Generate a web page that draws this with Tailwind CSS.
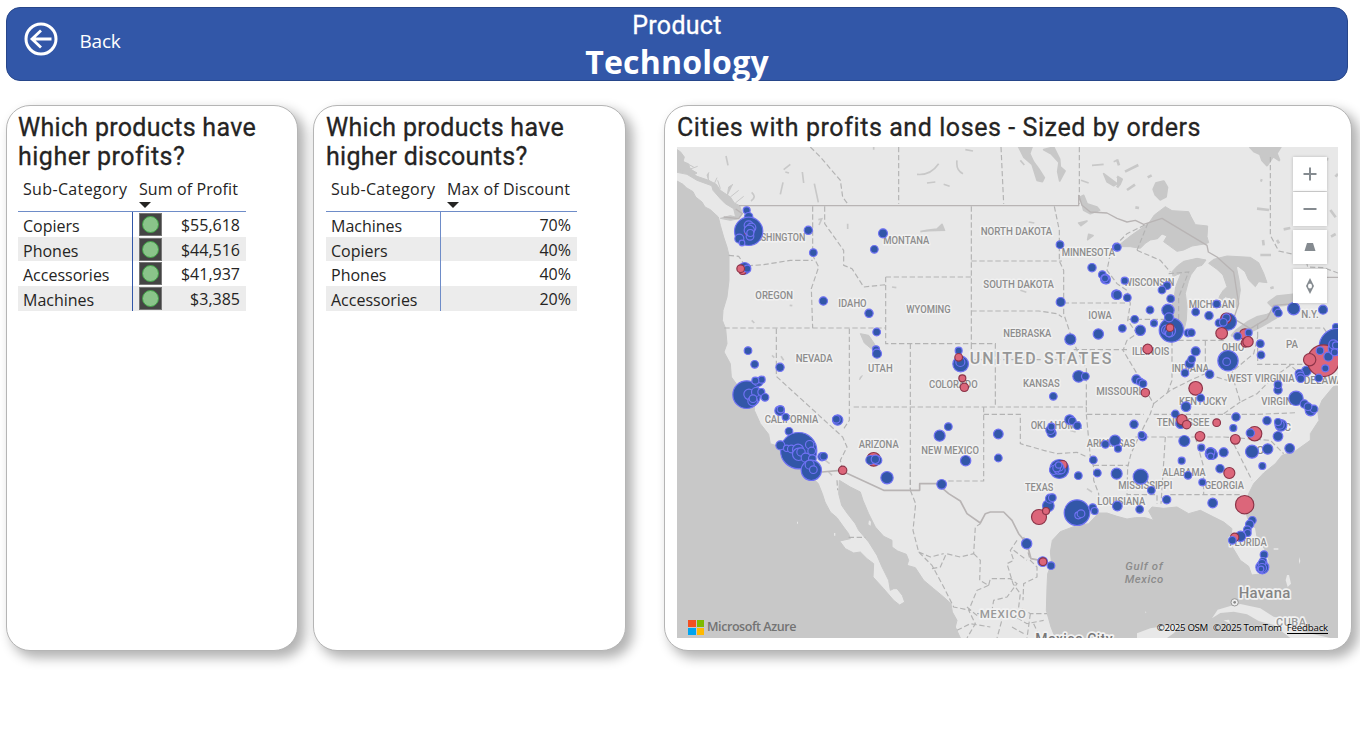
<!DOCTYPE html>
<html lang="en">
<head>
<meta charset="utf-8">
<title>Product Technology</title>
<script src="https://cdn.jsdelivr.net/npm/@tailwindcss/browser@4"></script>
</head>
<body class="bg-white w-[1360px] h-[729px] overflow-hidden font-['Open_Sans',sans-serif] text-[#252423]">
<header class="relative ml-[6px] mt-[7px] w-[1342px] h-[74px] rounded-[14px] bg-[#3257a8] border border-[#27468a] flex justify-center text-white">
  <div class="absolute left-[16.500px] top-[14px] flex items-center">
    <svg class="size-[34px]" viewBox="0 0 34 34" fill="none" stroke="#fff"><circle cx="17" cy="17" r="15" stroke-width="3"/><path d="M27.500 17H8M17 8.500L8 17L17 25.500" stroke-width="2.800"/></svg>
    <span class="ml-[22px] mt-[3px] text-[19px] leading-6 tracking-[-0.2px]">Back</span>
  </div>
  <div class="flex flex-col items-center">
    <span class="mt-[3px] h-[29px] leading-[30px] text-[25px] tracking-[0.3px] font-['Roboto',sans-serif] [-webkit-text-stroke:0.3px_white]">Product</span>
    <span class="h-[44px] leading-[43px] text-[32px] font-bold tracking-[0.2px]">Technology</span>
  </div>
</header>
<main class="mt-[24px] ml-[6px] flex items-start">
  <section class="w-[292px] h-[546px] bg-white rounded-[24px] border border-[#b5b5b5] shadow-[6px_6px_12px_1px_rgba(0,0,0,0.3)] pl-[11px] pt-[7px]">
    <h2 class="font-['Roboto',sans-serif] text-[25px] leading-[29px] tracking-[0.3px] [-webkit-text-stroke:0.3px_#252423]"><span>Which products have</span><br><span class="tracking-[0.5px]">higher profits?</span></h2>
    <div class="mt-[7px] w-[228px] text-[16px]">
      <div class="flex h-[34px] border-b border-[#6e8cc8] mt-[6px]">
        <div class="w-[115px] pl-[5px] leading-[22px] tracking-[0.35px]">Sub-Category</div>
        <div class="pl-[6px] leading-[22px] tracking-[0.1px]">Sum of Profit<div class="mt-[2px] border-x-[6px] border-x-transparent border-t-[6px] border-t-[#252423] w-0"></div></div>
      </div>
      <div id="profit" class="leading-[25px]"></div>
    </div>
  </section>
  <section class="ml-[15px] w-[313px] h-[546px] bg-white rounded-[24px] border border-[#b5b5b5] shadow-[6px_6px_12px_1px_rgba(0,0,0,0.3)] pl-[12px] pt-[7px]">
    <h2 class="font-['Roboto',sans-serif] text-[25px] leading-[29px] tracking-[0.3px] [-webkit-text-stroke:0.3px_#252423]"><span>Which products have</span><br><span>higher discounts?</span></h2>
    <div class="mt-[7px] w-[251px] text-[16px]">
      <div class="flex h-[34px] border-b border-[#6e8cc8] mt-[6px]">
        <div class="w-[115px] pl-[5px] leading-[22px] tracking-[0.35px]">Sub-Category</div>
        <div class="pl-[6px] leading-[22px] tracking-[0.15px]">Max of Discount<div class="mt-[2px] border-x-[6px] border-x-transparent border-t-[6px] border-t-[#252423] w-0"></div></div>
      </div>
      <div id="discount" class="leading-[25px]"></div>
    </div>
  </section>
  <section class="ml-[38px] w-[688px] h-[546px] bg-white rounded-[24px] border border-[#b5b5b5] shadow-[6px_6px_12px_1px_rgba(0,0,0,0.3)] pl-[12px] pt-[7px]">
    <h2 class="font-['Roboto',sans-serif] text-[25px] leading-[29px] tracking-[0.58px] [-webkit-text-stroke:0.3px_#252423]"><span>Cities with profits and loses - Sized by orders</span></h2>
    <div class="relative mt-[5px] w-[661px] h-[491px] overflow-hidden bg-[#e8e8e8]">
      <svg class="block w-[661px] h-[491px]" viewBox="0 0 1983 1473" font-family="Roboto, sans-serif">
        <!-- water -->
        <g fill="#c8c8c8" stroke="#c8c8c8" stroke-width="3" stroke-linejoin="round">
          <path d="M0 102L18 112 28 122 48 134 56 150 75 165 84 180 100 188 124 210 130 235 140 270 150 300 156 325 156 400 150 450 138 490 136 520 146 545 150 590 141 615 160 650 163 690 185 720 232 770 232 790 250 830 275 862 280 890 310 900 340 930 375 960 400 985 424 1010 436 1040 444 1065 460 1095 480 1112 500 1140 515 1160 520 1175 488 1182 505 1205 530 1218 550 1215 570 1235 590 1250 588 1290 620 1325 650 1360 668 1374 683 1365 676 1345 660 1325 650 1325 640 1330 635 1300 615 1260 600 1225 575 1185 545 1150 535 1130 510 1098 494 1075 485 1040 487 1000 520 1020 550 1035 558 1060 575 1100 595 1140 620 1168 645 1180 645 1200 662 1212 688 1222 695 1240 690 1255 715 1262 740 1300 770 1325 800 1350 822 1370 826 1395 840 1420 835 1440 850 1473 0 1473Z"/>
          <path d="M0 62L30 68 60 88 95 100 118 112 130 130 160 150 172 168 188 176 196 200 182 216 160 220 130 214 160 206 176 210 170 185 145 170 130 155 108 130 104 116 60 100 30 82 0 76Z"/>
          <path d="M0 8L10 14 22 30 18 44 34 50 40 66 60 78 50 84 20 72 0 64ZM5 36L30 50 50 60M40 66L62 58M95 100L90 84 96 76M112 110L120 92M130 125L122 100M150 150L155 120 168 112M160 150L185 130M175 168L200 148" />
          <g transform="translate(1320 -141)">
            <path d="M0 440L40 408 95 370 112 345 145 320 165 332 215 335 222 350 235 374 272 378 270 410 275 428 262 432 225 438 200 450 180 454 155 436 140 425 150 408 135 402 122 416 100 420 85 430 70 445 40 440Z"/>
            <path d="M165 515L182 497 200 484 240 475 267 480 255 496 240 500 222 524 214 545 205 580 210 620 208 660 200 695 180 708 165 680 160 630 172 590 176 560 192 520 180 524 168 530Z"/>
            <path d="M275 490L290 478 330 468 400 472 425 488 440 520 450 548 425 545 415 560 395 540 384 515 365 500 358 500 366 540 370 570 362 625 345 612 340 594 324 590 312 610 300 612 308 588 318 572 330 560 318 525 300 508Z"/>
            <path d="M345 706L360 690 395 665 420 652 450 645 480 632 478 652 430 680 400 695 375 711ZM455 608L480 590 535 584 535 608 500 615 465 618ZM400 141L412 154 430 162 436 180 450 195 468 168 486 180 478 160 490 141ZM118 250L140 245 150 262 146 290 130 298 116 284 110 268ZM24 215L64 195M30 270L54 254M0 230L14 238 8 252 0 262M92 232L104 226M55 322L66 324M0 178L6 196M430 240L436 242M420 326L456 330M640 330L656 352M642 410L656 402M500 388L520 384M620 175L634 178M655 230L663 222M430 465L462 465M460 565L470 562M480 420L486 430M438 420L440 436" stroke-width="8"/>
          </g>
          <path d="M1983 712L1968 720 1935 760 1922 792 1926 820 1900 860 1900 880 1855 912 1815 925 1795 950 1760 978 1730 1010 1715 1040 1704 1085 1712 1115 1736 1145 1740 1170 1765 1210 1776 1240 1775 1262 1750 1281 1724 1284 1715 1258 1690 1240 1666 1200 1660 1178 1665 1145 1640 1125 1610 1110 1570 1090 1535 1100 1500 1080 1460 1084 1425 1080 1415 1092 1425 1110 1430 1120 1405 1112 1375 1112 1350 1116 1320 1108 1290 1098 1265 1098 1235 1130 1190 1139 1150 1154 1126 1180 1120 1215 1124 1250 1112 1280 1110 1320 1108 1390 1122 1440 1135 1473 1983 1473Z"/>
          <path d="M365 0L380 30 405 52 420 100 436 104 442 92 425 65 410 45 398 20 405 0ZM440 8L470 0 488 36 490 60 504 72 488 102 482 74 486 46 462 20ZM550 150L560 145 570 170 600 180 608 190 580 200 560 190ZM620 80L660 110 650 116 630 104ZM545 228L570 222 552 236ZM575 262L588 266 572 278ZM370 40L382 54M205 8L228 12M115 105L90 108M552 100L575 108M585 55L620 52M650 44L660 40M140 112L158 118M70 254L90 250 120 246 135 232 143 252M395 225L412 228M370 430L388 436" transform="translate(660 0)" stroke-width="5"/>
          <path d="M550 560L575 565 592 590 598 605 584 606 562 588ZM550 690L556 686 548 698Z"/>
        </g>
        <g fill="none" stroke="#c8c8c8" stroke-width="5"><path d="M147 27L153 55M320 68L340 52M325 75L336 78M318 106L310 142M376 75L380 108M412 110L424 166M224 136Q240 150 222 162M512 230V246M424 218L434 216 426 234M224 520L232 528M338 475L346 476M720 82Q760 86 785 50M840 40Q836 70 858 80M645 420L658 422M556 565H566M285 625L292 632M312 628L320 640M445 940L458 950M455 975L465 985M1180 850L1196 855M1230 1025L1245 1035M590 0V8"/></g>
        <!-- islands -->
        <g fill="#e8e8e8">
          <path d="M1605 1414L1622 1388 1660 1377 1690 1371 1750 1384 1790 1409 1840 1420 1880 1455 1960 1473 1840 1473 1790 1434 1745 1422 1710 1402 1670 1394 1630 1398ZM1380 1459L1420 1444 1520 1429 1490 1459 1470 1473 1380 1473ZM1830 1284L1836 1284 1842 1310 1832 1320 1826 1300ZM1866 1226L1869 1250M1640 1420L1656 1418 1660 1430Z"/>
          <path d="M360 1124h3v6h-3zM471 1158h4v8h-4zM576 1120l6 4-1 12-7-4zM1404 1393l4 3-2 3zM1790 1204h14v4h-14zM1866 1230l4 12-4 10z"/>
        </g>
        <!-- state and province lines -->
        <g fill="none" stroke="#b3b3b3" stroke-width="3.500" stroke-dasharray="16 8">
          <path d="M400 0L430 30 490 100 497 150 515 175M665 0V170M972 0L980 170M1207 0V170M1780 30V265L1805 312 1885 330 1892 360 1940 362 1983 378"/>
          <path d="M407 178V325L425 360 403 425 407 543M443 178V230L500 310 500 355 525 365 560 420 626 413M155 325L185 328 205 357 260 353 340 340H407M142 543H626M626 390H883M626 390V590H955V780M883 178V590M298 545V688L497 870 510 900 490 940 497 970M517 545V820L497 850M530 780H1228M700 590V1025"/>
          <path d="M883 342H1155M883 492H1085L1140 500 1155 510M1132 178L1147 250 1147 342 1160 370V500L1180 560 1200 610 1228 665V780M1160 468H1350M883 590V638H955M955 638H1190M1190 608H1350M920 780V1002H780M920 802H1030V890L1100 910 1140 920 1200 916 1230 930M1228 780V802H1400M1228 802L1240 930 1250 960V1000L1265 1040V1080M1250 955H1355"/>
          <path d="M1300 320L1290 370 1320 410 1350 430 1360 470 1352 520 1380 560 1350 580 1338 610 1380 680 1400 720 1430 770 1420 800 1390 860 1362 920 1352 960 1350 1043H1440V1070M1375 870H1640M1430 802H1740L1860 797M1465 870L1452 1070M1555 870L1580 960V1043M1480 1043H1690M1660 870L1700 950 1725 1000M1640 870L1780 880 1820 920M1485 580V700L1470 740M1585 580V680M1430 770L1480 730 1540 700 1585 680 1650 700 1670 670 1730 620 1742 570M1742 530V652H1960M1480 580H1640M1770 543H1940L1965 580M1670 700L1690 765 1740 740 1790 690 1840 655 1880 690M1640 800L1690 765M1355 517H1475M1380 310L1450 340 1480 375M1380 310L1412 230 1350 260 1320 290M1475 380L1535 375 1505 450V555"/>
          <path d="M700 1030L716 1070 708 1150 725 1215 765 1255 800 1320 830 1380 880 1390M725 1215L760 1230 800 1220M765 1265L790 1260 808 1220 850 1230 890 1220 895 1140 910 1130M890 1220L910 1240 908 1300 935 1315 940 1295 1000 1295 1020 1310 990 1350 950 1360 945 1390M935 1315L900 1330 875 1390 895 1430 870 1473M1020 1180L1000 1210 1010 1240 990 1250 1008 1310 1030 1340 1025 1380 1060 1400 1110 1400M1040 1170L1060 1240 1080 1260 1080 1290 1040 1310 1038 1360M980 1400L960 1473M1000 1400L1050 1430 1100 1420M1060 1400L1050 1473M840 1450L880 1430 940 1440M700 950L700 1030M1010 1210L1050 1240M1005 1440L1040 1460M515 1171H565M480 1000L482 1030M1070 1430L1090 1473M870 1380L905 1410M900 1400H940"/>
        </g>
        <!-- national borders -->
        <g fill="none" stroke="#b8b4b4" stroke-width="5" stroke-linejoin="round">
          <path d="M186 176H1205V145L1215 175 1240 195 1290 198 1320 214 1350 225 1375 220 1400 232 1455 214 1590 295 1594 315 1620 330 1670 375 1685 470 1670 515 1720 545 1770 515 1790 475 1850 470 1890 391H1983" stroke-width="4"/>
          <path d="M176 186L196 200 185 215 140 210" stroke-width="4"/>
          <path d="M435 975L490 970 620 1030H728V1010H780L815 1040 850 1062 870 1100 910 1128 925 1100 940 1095 980 1095 1005 1120 1025 1160 1050 1190 1062 1235 1090 1240"/>
        </g>
        <!-- place names -->
        <g id="labels" fill="#8c8c8c" stroke="#f1f1f1" stroke-width="9" stroke-linejoin="round" paint-order="stroke" font-size="31" font-weight="500"></g>
        <g fill="#999" stroke="#f1f1f1" stroke-width="10" stroke-linejoin="round" paint-order="stroke" font-weight="500">
          <text x="878" y="650" font-size="48" textLength="425" fill="#969696">UNITED STATES</text>
          <text x="908" y="1413" font-size="35" textLength="138">MEXICO</text>
          <text x="1797" y="1437" font-size="33" textLength="90">CUBA</text>
          <text x="1685" y="1352" font-size="45" textLength="155" fill="#858585">Havana</text>
          <text x="1075" y="1491" font-size="42" textLength="232" fill="#777">Mexico City</text>
        </g>
        <g fill="#8c8c8c" font-size="34" font-style="italic" font-weight="500"><text x="1345" y="1268" textLength="112" stroke="none">Gulf of</text><text x="1343" y="1309" textLength="116">Mexico</text></g>
        <circle cx="1673" cy="1366" r="11" fill="#eee" stroke="#999" stroke-width="3"/><circle cx="1673" cy="1366" r="4" fill="#888"/>
        <g id="dots" stroke-width="3.500"></g>
      </svg>
      <div class="absolute left-[616px] top-[10px] w-[34px] flex flex-col">
        <div class="bg-white h-[34px] flex items-center justify-center shadow-[0_0_3px_rgba(0,0,0,0.2)]"><svg width="14" height="14" stroke="#858b90" stroke-width="2"><path d="M7 .5V13.500M.5 7H13.500"/></svg></div>
        <div class="mt-[1px] bg-white h-[34px] flex items-center justify-center shadow-[0_0_3px_rgba(0,0,0,0.2)]"><svg width="14" height="14" stroke="#858b90" stroke-width="2"><path d="M.5 7H13.500"/></svg></div>
        <div class="mt-[4px] bg-white h-[34px] flex items-center justify-center shadow-[0_0_3px_rgba(0,0,0,0.2)]"><svg width="12" height="10"><path d="M3 1H9L11.500 9H.5Z" fill="#858b90"/></svg></div>
        <div class="mt-[5px] bg-white h-[34px] flex items-center justify-center shadow-[0_0_3px_rgba(0,0,0,0.2)]"><svg width="10" height="16"><path fill-rule="evenodd" d="M5 0L9 8L5 16L1 8ZM5 5.500A2 2.500 0 1 0 5 10.500A2 2.500 0 1 0 5 5.500Z" fill="#858b90"/></svg></div>
      </div>
      <div class="absolute left-[11px] top-[472px] flex items-center h-[16px]">
        <div class="grid grid-cols-2 gap-[1px] w-[16px] h-[15px]"><i class="bg-[#f25022]"></i><i class="bg-[#7fba00]"></i><i class="bg-[#00a4ef]"></i><i class="bg-[#ffb900]"></i></div>
        <span class="ml-[3px] text-[12.500px] font-semibold text-[#737373] tracking-[-0.43px]">Microsoft Azure</span>
      </div>
      <div class="absolute right-[10px] top-[474px] h-[13px] flex text-[9.700px] leading-[14px] text-black tracking-[-0.35px] [text-shadow:0_0_2px_white]"><span>©2025 OSM</span><span class="ml-[5px]">©2025 TomTom</span><span class="ml-[5px] border-b border-black tracking-[-0.2px]">Feedback</span></div>
    </div>
  </section>
</main>
<script>
const profit = [["Copiers","$55,618"],["Phones","$44,516"],["Accessories","$41,937"],["Machines","$3,385"]];
const discount = [["Machines","70%"],["Copiers","40%"],["Phones","40%"],["Accessories","20%"]];
const row = (name, value, i, icon) => `<div class="flex items-center h-[24.700px] ${i % 2 ? "bg-[#ececec]" : ""}">
  <div class="w-[115px] h-full pl-[5px] pt-[2px] border-r ${icon ? "border-[#3257a8]" : "border-[#6e8cc8]"}">${name}</div>
  ${icon ? '<div class="ml-[6px] size-[23px] bg-[#444] border border-[#777] flex items-center justify-center"><div class="size-[17px] rounded-full bg-[#8ac48a] border border-[#3fa045]"></div></div>' : ""}
  <div class="ml-auto pr-[6px] pt-[2px]">${value}</div></div>`;
document.getElementById("profit").innerHTML = profit.map((r, i) => row(r[0], r[1], i, true)).join("");
document.getElementById("discount").innerHTML = discount.map((r, i) => row(r[0], r[1], i, false)).join("");

// name, x, baseline, width
const labels = [["WASHINGTON",210,283,175],["OREGON",235,456,113],["IDAHO",484,479,85],["MONTANA",619,292,138],["NORTH DAKOTA",911,263,215],["SOUTH DAKOTA",919,424,212],["MINNESOTA",1154,327,160],["WYOMING",688,498,133],["IOWA",1234,517,70],["NEBRASKA",979,571,144],["NEVADA",356,646,111],["UTAH",573,675,74],["CALIFORNIA",263,829,161],["ARIZONA",545,903,120],["COLORADO",756,723,146],["KANSAS",1038,720,110],["MISSOURI",1258,744,135],["OKLAHOMA",1061,845,154],["NEW MEXICO",733,922,173],["TEXAS",1044,1032,85],["ARKANSAS",1229,899,146],["LOUISIANA",1261,1073,144],["WISCONSIN",1340,417,152],["MICHIGAN",1535,484,138],["N.Y.",1873,512,52],["ILLINOIS",1365,623,112],["INDIANA",1484,675,112],["OHIO",1634,612,68],["PA",1827,603,36],["WEST VIRGINIA",1651,704,202],["DELAWARE",1880,710,155],["VIRGINIA",1753,775,120],["KENTUCKY",1506,775,144],["TENNESSEE",1439,838,158],["NC",1800,851,42],["SC",1718,921,42],["ALABAMA",1456,986,130],["MISSISSIPPI",1324,1027,162],["GEORGIA",1583,1027,118],["FLORIDA",1657,1198,112]];
document.getElementById("labels").innerHTML = labels.map(([t, x, y, w]) => `<text x="${x}" y="${y}" textLength="${w}" lengthAdjust="spacingAndGlyphs">${t}</text>`).join("");

// dx, dy of the region, then its bubbles: x, y, radius, 1 = loss
const regions = [
 [0,0,[[208,190,11],[214,209,13],[214,253,43],[207,259,5,1],[214,235,14],[222,242,14],[216,250,16],[218,268,12],[219,258,11],[186,275,14],[194,288,9],[393,250,13],[408,317,12],[202,364,18],[196,372,11,1],[210,365,11],[190,365,12,1],[438,462,13],[575,499,13],[598,555,12],[617,259,14],[591,307,12]]],
 [0,570,[[212,41,12],[232,82,12],[308,91,13],[596,37,11],[599,50,14],[208,173,42],[243,135,14],[253,128,11],[234,131,11],[215,172,16],[236,165,14],[252,165,11],[263,181,12],[226,192,15],[227,185,12],[307,221,15],[310,217,11],[325,240,11],[481,249,16],[477,247,12],[335,283,12],[364,341,55],[309,325,14],[328,334,10],[342,336,12],[397,323,13],[403,342,12],[362,338,17],[364,352,19],[371,345,13],[385,362,14],[405,365,12],[402,400,31],[397,383,14],[408,398,12],[434,359,13],[439,358,12],[589,367,21,1],[579,369,14],[600,370,14],[594,367,13],[629,422,19],[496,400,13,1]]],
 [660,0,[[488,293,12],[490,465,14],[584,362,13],[615,383,12],[624,396,15],[628,400,11],[623,394,11],[657,300,12],[657,443,15],[519,577,17],[603,561,16]]],
 [660,570,[[184,41,11],[190,81,24],[189,75,14],[184,61,12,1],[195,124,11,1],[201,151,13,1],[544,118,18],[564,118,12],[468,178,12],[153,269,12],[127,296,17],[303,291,15],[303,363,12],[205,371,16],[133,442,15],[517,248,15],[525,252,12],[540,266,12],[463,288,14],[459,279,14],[462,269,11],[492,387,17,1],[486,396,29],[496,384,14,1],[470,399,14],[484,397,15],[492,399,12],[486,390,13],[478,393,12],[484,384,10],[588,369,12],[624,322,12],[653,311,17],[600,408,12],[543,416,12],[658,410,17]]],
 [1320,-141,[[0,442,12],[22,542,11],[30,593,12],[0,585,14],[149,557,12],[134,570,12],[160,596,12],[98,630,12],[52,658,12],[15,685,12],[110,670,11],[69,691,16],[152,631,19],[162,690,37],[155,652,14],[147,690,15],[157,693,18],[155,700,11],[158,683,12,1],[212,699,12],[222,698,12],[235,636,12],[298,612,12],[275,647,13],[332,665,26],[326,655,16,1],[327,653,12],[305,669,12],[318,667,12],[313,700,18,1],[383,703,17,1],[394,698,11],[361,709,12],[477,630,12],[483,639,12],[529,626,19],[617,629,14],[656,681,11]]],
 [1320,549,[[384,39,13,1],[392,35,16,1],[91,57,15,1],[235,64,14],[217,101,14],[223,88,12],[203,129,12],[277,133,13],[332,92,31],[328,95,12],[429,41,12],[431,75,12],[57,148,14],[68,155,11],[77,161,12],[84,188,13,1],[235,175,21,1],[250,204,12],[206,230,15],[174,252,12],[190,281,15],[194,269,16,1],[208,284,13,1],[298,278,12,1],[356,261,13],[348,294,11],[354,328,15,1],[412,311,22,1],[399,309,13],[449,272,13],[491,286,18],[487,284,14],[482,276,11],[482,319,15],[451,357,16],[404,365,20],[517,355,15],[435,408,11],[50,283,13],[76,320,13],[73,315,11],[2,356,11],[201,333,17],[248,319,15,1],[252,353,11],[281,371,18],[287,374,14],[279,367,14],[280,379,10],[319,367,14],[193,392,11],[308,416,13],[336,429,17,1],[212,436,12],[255,457,11],[70,440,23],[102,481,12],[148,509,13],[286,519,15],[482,180,13],[482,164,12],[536,205,22],[561,222,13],[580,241,17],[590,237,12],[572,230,12],[567,123,15],[546,131,13],[549,140,14],[550,146,12],[660,50,55],[618,92,48,1],[604,144,12],[577,89,19,1],[608,62,12],[633,80,14],[654,55,22],[648,43,14],[656,46,11],[652,67,11],[624,115,11],[382,524,28,1]]],
 [660,1059,[[453,17,18],[458,-4,14],[465,-7,12],[425,51,23,1],[446,33,11,1],[539,38,39],[543,46,11],[551,41,12],[586,23,12],[592,33,11],[388,131,16],[436,185,15],[437,185,12,1],[461,197,12],[660,18,15]]],
 [1320,1059,[[67,28,12],[405,61,12],[397,73,13],[390,89,12],[391,99,11],[370,109,16],[352,112,13,1],[345,121,12],[440,164,12],[435,202,20],[437,184,12],[434,190,12],[434,204,14],[431,207,9]]]
];
document.getElementById("dots").innerHTML = regions.map(([dx, dy, list]) => list.map(([x, y, r, loss]) =>
  `<circle cx="${x + dx + 1}" cy="${y + dy}" r="${r - 0.5}" fill="${loss ? "#dc667a" : "#3257a8"}" stroke="${loss ? "#8c3448" : "#7072f4"}"/>`).join("")).join("");
</script>
</body>
</html>
